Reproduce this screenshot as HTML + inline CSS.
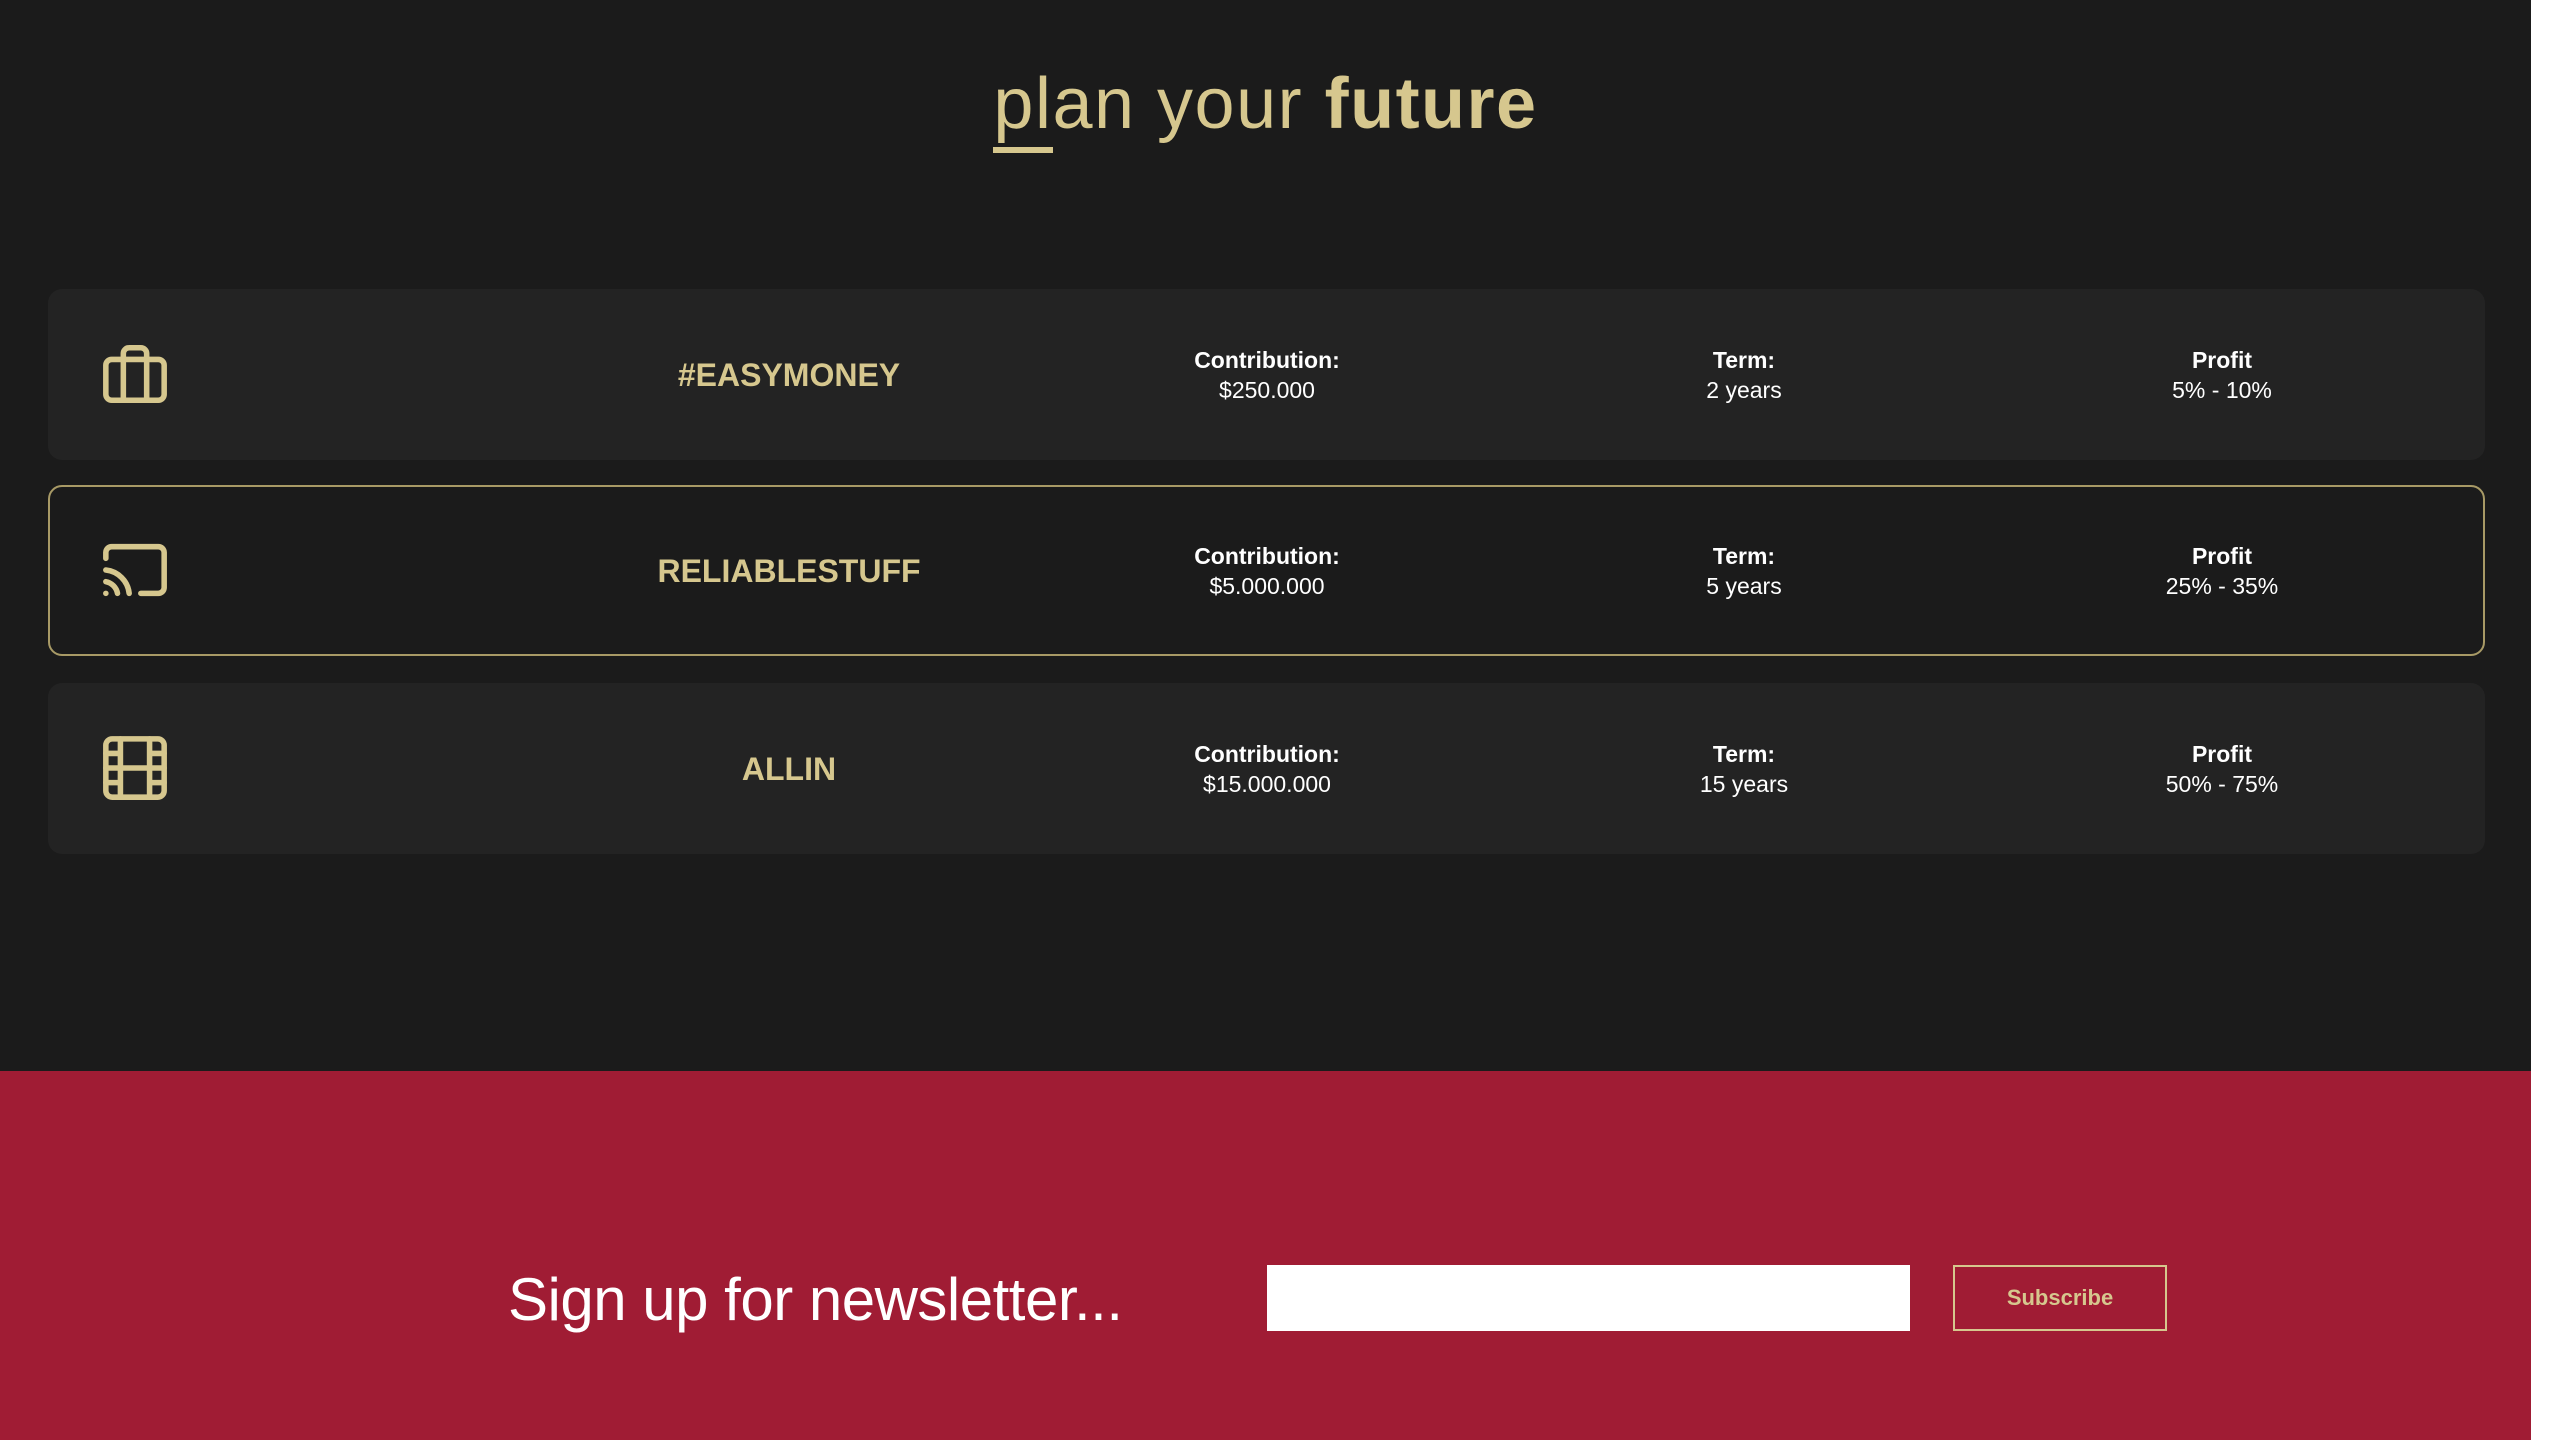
<!DOCTYPE html>
<html><head><meta charset="utf-8"><style>
*{margin:0;padding:0;box-sizing:border-box}
body{width:2560px;height:1440px;background:#fff;font-family:"Liberation Sans",sans-serif;position:relative;overflow:hidden}
.page{position:absolute;left:0;top:0;width:2531px;height:1440px;background:#1b1b1b}
.title{position:absolute;left:0;width:2531px;top:63px;text-align:center;font-size:72px;color:#d6c78e;font-weight:300;letter-spacing:1.5px}
.title b{font-weight:900}
.ul{position:absolute;left:993px;top:147px;width:60px;height:6px;background:#d6c78e}
.card{position:absolute;left:48px;width:2437px;height:171px;background:#232323;border-radius:14px}
.card.sel{background:#1b1b1b;border:2px solid #a89a66}
.icon{position:absolute;left:52px;top:50px;width:70px;height:70px}
.name{position:absolute;width:500px;left:491px;text-align:center;top:68px;font-size:32px;font-weight:bold;color:#d6c78e}
.col{position:absolute;width:400px;text-align:center;top:56px;color:#fff;font-size:23px;line-height:30px}
.col b{display:block}
.red{position:absolute;left:0;top:1071px;width:2531px;height:369px;background:#a01c34}
.nl{position:absolute;left:508px;top:1265px;font-size:60px;color:#fff;font-weight:300;letter-spacing:-0.5px}
.inp{position:absolute;left:1267px;top:1265px;width:643px;height:66px;background:#fff}
.btn{position:absolute;left:1953px;top:1265px;width:214px;height:66px;border:2px solid #d6c78e;color:#d6c78e;font-weight:bold;font-size:22px;text-align:center;line-height:62px}
</style></head><body>
<div class="page">
<div class="title">plan your <b>future</b></div>
<div class="ul"></div>

<div class="card" style="top:289px">
<svg class="icon" viewBox="0 0 24 24" fill="none" stroke="#d6c78e" stroke-width="1.9" stroke-linecap="round" stroke-linejoin="round"><rect x="2" y="7" width="20" height="14" rx="2"/><path d="M8 21V5a2 2 0 0 1 2-2h4a2 2 0 0 1 2 2v16"/></svg>
<div class="name">#EASYMONEY</div>
<div class="col" style="left:1019px"><b>Contribution:</b>$250.000</div>
<div class="col" style="left:1496px"><b>Term:</b>2 years</div>
<div class="col" style="left:1974px"><b>Profit</b>5% - 10%</div>
</div>

<div class="card sel" style="top:485px">
<svg class="icon" style="left:50px;top:48px" viewBox="0 0 24 24" fill="none" stroke="#d6c78e" stroke-width="1.9" stroke-linecap="round" stroke-linejoin="round"><path d="M2 8V6a2 2 0 0 1 2-2h16a2 2 0 0 1 2 2v12a2 2 0 0 1-2 2h-6"/><path d="M2 12a9 9 0 0 1 8 8"/><path d="M2 16a5 5 0 0 1 4 4"/><path d="M2 20h.01"/></svg>
<div class="name" style="left:489px;top:66px">RELIABLESTUFF</div>
<div class="col" style="left:1017px;top:54px"><b>Contribution:</b>$5.000.000</div>
<div class="col" style="left:1494px;top:54px"><b>Term:</b>5 years</div>
<div class="col" style="left:1972px;top:54px"><b>Profit</b>25% - 35%</div>
</div>

<div class="card" style="top:683px">
<svg class="icon" viewBox="0 0 24 24" fill="none" stroke="#d6c78e" stroke-width="1.9" stroke-linecap="round" stroke-linejoin="round"><rect x="2" y="2" width="20" height="20" rx="2.2"/><path d="M7 2v20M17 2v20M2 12h20M2 7h5M2 17h5M17 17h5M17 7h5"/></svg>
<div class="name">ALLIN</div>
<div class="col" style="left:1019px"><b>Contribution:</b>$15.000.000</div>
<div class="col" style="left:1496px"><b>Term:</b>15 years</div>
<div class="col" style="left:1974px"><b>Profit</b>50% - 75%</div>
</div>

<div class="red">
</div>
<div class="nl">Sign up for newsletter...</div>
<div class="inp"></div>
<div class="btn">Subscribe</div>
</div>
</body></html>
